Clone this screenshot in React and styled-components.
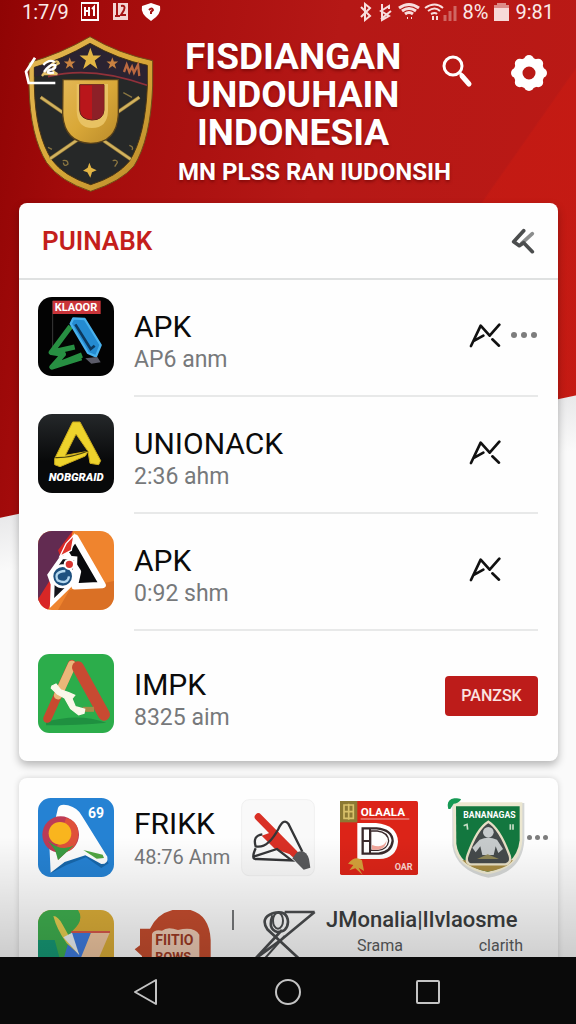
import React from 'react'
import styled, { createGlobalStyle } from 'styled-components'

const apps = [
  { name: 'APK', time: 'AP6 anm', icon: KlaoorIcon, more: true },
  { name: 'UNIONACK', time: '2:36 ahm', icon: NobgraidIcon },
  { name: 'APK', time: '0:92 shm', icon: FalconIcon },
  { name: 'IMPK', time: '8325 aim', icon: GreenIcon, action: 'PANZSK' },
]

function App() {
  return (
    <Screen>
      <GlobalStyle />
      <Content>
        <StatusBar>
          <StatusGroup>
            <span>1:7/9</span>
            <StatusIcons />
          </StatusGroup>
          <StatusGroup $tight>
            <SignalIcons />
            <span>8%</span>
            <Battery />
            <span>9:81</span>
          </StatusGroup>
        </StatusBar>
        <Header>
          <Brand>
            <Crest />
            <BackButton aria-label="Back">
              <svg width="34" height="30" viewBox="0 0 102 90" fill="none" stroke="#fff">
                <path d="M33 5 L6 47 L14 81 H94" strokeWidth="8" />
                <path d="M58 27 Q75 8 92 18 M60 48 Q80 20 94 28 Q96 40 76 42 Q62 54 90 50" strokeWidth="7" />
              </svg>
            </BackButton>
          </Brand>
          <Title>FISDIANGAN<br />UNDOUHAIN<br />INDONESIA</Title>
          <HeaderActions>
            <IconButton aria-label="Search">
              <svg width="32" height="34" viewBox="0 0 32 34" fill="none" stroke="#fff">
                <circle cx="11" cy="12" r="9" strokeWidth="3" />
                <path d="M18 19l3 3" strokeWidth="3" />
                <path d="M20 22l7 8" strokeWidth="5" strokeLinecap="round" />
              </svg>
            </IconButton>
            <IconButton aria-label="Settings">
              <Gear />
            </IconButton>
          </HeaderActions>
          <Subtitle>MN PLSS RAN IUDONSIH</Subtitle>
        </Header>
        <Card>
          <CardHeader>
            <CardTitle>PUINABK</CardTitle>
            <IconButton aria-label="Collapse">
              <svg width="24" height="26" viewBox="0 0 72 78" fill="none" strokeLinecap="round">
                <path d="M64 17 L32 46" stroke="#8b8d8d" strokeWidth="11" />
                <path d="M38 8 L8 41 L25 53 L38 44 L64 71" stroke="#4b4d4e" strokeWidth="11" strokeLinejoin="round" />
              </svg>
            </IconButton>
          </CardHeader>
          <List>
            {apps.map((app, index) => (
              <Row key={index} $last={index === apps.length - 1}>
                <AppIcon><app.icon /></AppIcon>
                <RowBody>
                  <Info>
                    <Name>{app.name}</Name>
                    <Time>{app.time}</Time>
                  </Info>
                  {app.action ? (
                    <ActionButton>{app.action}</ActionButton>
                  ) : (
                    <RowActions>
                      <IconButton aria-label="Activity">
                        <svg width="32" height="26" viewBox="0 0 96 78" fill="none" stroke="#111" strokeWidth="8" strokeLinecap="round" strokeLinejoin="round">
                          <path d="M6 72 L35 11 L62 41 L91 8 M16 56 L43 41" />
                          <path d="M70 52 L90 71" />
                        </svg>
                      </IconButton>
                      <MoreSlot>{app.more && <More />}</MoreSlot>
                    </RowActions>
                  )}
                </RowBody>
              </Row>
            ))}
          </List>
        </Card>
        <Card $lower>
          <Shelf>
            <AppIcon $flat><BalloonIcon /></AppIcon>
            <ShelfInfo>
              <Name>FRIKK</Name>
              <Time $small>48:76 Anm</Time>
            </ShelfInfo>
            <PenTile />
            <RedTile />
            <ShieldTile />
            <More small />
          </Shelf>
          <Promo>
            <AppIcon $flat><DriveIcon /></AppIcon>
            <HeadIcon />
            <Bar />
            <RibbonIcon />
            <PromoText>
              <PromoTitle>JMonalia|Ilvlaosme</PromoTitle>
              <PromoLinks>
                <span>Srama</span>
                <span>clarith</span>
              </PromoLinks>
            </PromoText>
          </Promo>
        </Card>
      </Content>
      <NavBar>
        <NavButton aria-label="Back">
          <svg width="28" height="30" viewBox="0 0 28 30" fill="none" stroke="#c4c4c4" strokeWidth="2" strokeLinejoin="round">
            <path d="M22 3v24L1 15z" />
          </svg>
        </NavButton>
        <NavButton aria-label="Home">
          <svg width="28" height="28" viewBox="0 0 28 28" fill="none" stroke="#c4c4c4" strokeWidth="2">
            <circle cx="14" cy="14" r="12" />
          </svg>
        </NavButton>
        <NavButton aria-label="Recent apps">
          <svg width="28" height="28" viewBox="0 0 28 28" fill="none" stroke="#c4c4c4" strokeWidth="2">
            <rect x="3" y="3" width="22" height="22" rx="1" />
          </svg>
        </NavButton>
      </NavBar>
    </Screen>
  )
}

export default App

function StatusIcons() {
  return (
    <svg width="82" height="20" viewBox="0 0 82 20" fill="none" stroke="#fff">
      <rect x="-1" y="1" width="17" height="17" strokeWidth="2" transform="translate(1 0)" />
      <path d="M4 5v9M8 5v9M4 9h4M11 7l2-2v9" strokeWidth="2" />
      <path d="M32 1h15v17H32z" fill="#f4d5d2" stroke="none" />
      <path d="M36 1v13M34 14h5M40 4q5-1 3 4l-3 5h5" stroke="#a51414" strokeWidth="2" />
      <path d="M70 1l9 3q2 8-9 15Q59 12 61 4z" fill="#fff" stroke="none" />
      <path d="M68 8q3-3 4 0l-2 2v2" stroke="#a51414" strokeWidth="2" />
    </svg>
  )
}

function SignalIcons() {
  return (
    <svg width="100" height="20" viewBox="0 0 100 20" fill="none" stroke="#f8dedd" strokeWidth="2">
      <path d="M3 5l9 9-5 4V2l5 4-9 9" />
      <path d="M24 2v16l7-4-8-5 8-5v3M23 17l10-8" />
      <path d="M41 6q10-7 20 0M44 9q7-5 14 0M47 12q4-3 8 0" strokeWidth="3" />
      <path d="M49 16h1M53 16h1M67 6q10-7 18 0M70 9q7-5 12 0M73 12q4-2 6 0M75 14v4M79 14v4" strokeWidth="2" />
      <path d="M87 13v6M92 9v10M97 4v15" stroke="#cf6763" strokeWidth="3" />
    </svg>
  )
}

function Battery() {
  return (
    <svg width="17" height="20" viewBox="0 0 17 20">
      <path d="M1 3h3V1h9v2h3v16H1z" fill="#f7d9d7" />
      <path d="M1 3h3V1h9v2h3v3H1z" fill="#dc8c88" />
    </svg>
  )
}

function Gear() {
  const teeth = [0, 45, 90, 135, 180, 225, 270, 315]
  return (
    <svg width="38" height="38" viewBox="0 0 38 38" fill="#fff">
      {teeth.map((deg) => (
        <circle key={deg} cx="19" cy="6" r="5" transform={`rotate(${deg} 19 19)`} />
      ))}
      <circle cx="19" cy="19" r="11" fill="none" stroke="#fff" strokeWidth="9" />
    </svg>
  )
}

function Crest() {
  const star = 'M0-28 L7-9 L27-9 L11 4 L18 25 L0 12 L-18 25 L-11 4 L-27-9 L-7-9z'
  return (
    <svg width="126" height="156" viewBox="0 0 378 468">
      <defs>
        <linearGradient id="gold" x1="0" y1="0" x2="1" y2="1">
          <stop offset="0" stopColor="#e3b755" />
          <stop offset="0.5" stopColor="#d9a838" />
          <stop offset="1" stopColor="#b98a2a" />
        </linearGradient>
      </defs>
      <path d="M186 2 Q270 52 374 74 V150 Q368 310 318 390 Q280 436 188 466 Q96 436 56 380 Q6 300 3 150 V80 Q100 52 186 2z" fill="url(#gold)" stroke="#6f4c18" strokeWidth="3" />
      <path d="M186 22 Q270 70 358 88 V150 Q352 300 304 376 Q266 422 188 446 Q108 420 72 372 Q22 296 19 150 V94 Q104 70 186 22z" fill="#262828" stroke="#4a3413" strokeWidth="3" />
      <path d="M186 24 Q270 72 357 90 V148 Q190 88 19 122 V95 Q104 70 186 24z" fill="#2b2331" />
      <path d="M357 148 Q190 88 60 122" fill="none" stroke="#91313a" strokeWidth="5" />
      <g stroke="#8a6f32" strokeWidth="11">
        <path d="M38 184 L308 370 M334 184 L66 368" />
      </g>
      <g stroke="#d1b25e" strokeWidth="7">
        <path d="M38 184 L308 370 M334 184 L66 368" />
      </g>
      <path d="M105 131 H271 V236 Q266 320 188 322 Q110 320 104 236z" fill="url(#gold)" stroke="#57401a" strokeWidth="4" />
      <path d="M146 144 H240 V225 Q238 276 192 276 Q148 276 146 225z" fill="#e8c263" />
      <path d="M155 146 H228 V222 Q226 252 192 252 Q156 250 155 222z" fill="#b9161b" stroke="#64201b" strokeWidth="3" />
      <path d="M192 147 H227 V222 Q226 250 192 251z" fill="#8d2027" />
      <g fill="#e2b544">
        <path d={star} transform="translate(187 69) scale(1.2)" />
        <path d={star} transform="translate(125 82) scale(.65)" fill="#c88141" />
        <path d={star} transform="translate(253 82) scale(.65)" fill="#c88141" />
        <path d="M184 380 l6 15 16 8-14 6-5 16-9-16-13-5 14-9z" />
      </g>
      <path d="M42 120 Q86 60 92 82 Q60 100 88 114 H44" fill="none" stroke="#e5c269" strokeWidth="7" />
      <path d="M288 108 l8-22 8 22 8-16 6 18 12-24 4 34" fill="none" stroke="#bb6940" strokeWidth="7" />
      <g fill="none" stroke="#8a7641" strokeWidth="4">
        <path d="M104 374 q16-4 16 10 q-12 10-14-4 M254 374 q14-4 14 6 l-8 12 M304 328 q14 4 8 14 M60 334 l12 6 M286 170 l26 14" />
      </g>
    </svg>
  )
}

function KlaoorIcon() {
  return (
    <svg viewBox="0 0 228 237">
      <rect width="228" height="237" rx="42" fill="#030303" />
      <path d="M44 12v140" stroke="#555" strokeWidth="2" />
      <rect x="44" y="11" width="144" height="40" fill="#c9353a" />
      <text x="50" y="43" fill="#fff" fontSize="33" fontWeight="700">KLAOOR</text>
      <path d="M98 88 L40 166 L110 150 M50 206 L132 174 M40 166 L76 172 L42 210 L130 182" fill="none" stroke="#278f42" strokeWidth="16" strokeLinejoin="round" />
      <path d="M106 64 L140 66 L188 144 L174 178 L150 168 L98 80z" fill="#248bd1" stroke="#48b1ed" strokeWidth="7" strokeLinejoin="round" />
      <path d="M112 82 L158 156 L170 146" fill="none" stroke="#0c385d" strokeWidth="8" />
      <path d="M142 184 l36-4 10 16-28 4z" fill="#5b5b68" />
    </svg>
  )
}

function NobgraidIcon() {
  return (
    <svg viewBox="0 0 228 237">
      <defs>
        <linearGradient id="coal" x1="0" y1="0" x2="0" y2="1">
          <stop offset="0" stopColor="#25282a" />
          <stop offset="0.6" stopColor="#08090a" />
        </linearGradient>
      </defs>
      <rect width="228" height="237" rx="42" fill="url(#coal)" />
      <path d="M104 24 H126 L188 140 L182 152 L156 148 L150 112 L114 60 L82 124 L150 112 L142 126 L66 158 L50 152 L50 134z" fill="#eed32c" stroke="#c9a91b" strokeWidth="3" strokeLinejoin="round" />
      <path d="M52 131 Q100 132 150 111" fill="none" stroke="#4d430d" strokeWidth="4" />
      <text x="32" y="202" fill="#fff" fontSize="34" fontWeight="900" fontStyle="italic">NOBGRAID</text>
    </svg>
  )
}

function FalconIcon() {
  return (
    <svg viewBox="0 0 228 237">
      <defs><clipPath id="falcon"><rect width="228" height="237" rx="42" /></clipPath></defs>
      <g clipPath="url(#falcon)">
        <rect width="228" height="237" fill="#ef842e" />
        <path d="M0 0 H104 L74 80 L0 220z" fill="#622b51" />
        <path d="M104 0 L60 58 L72 90 L0 205 V237 H30 L80 120z" fill="#d82726" />
        <path d="M94 178 L228 150 V237 H60z" fill="#ce6620" opacity=".65" />
        <path d="M112 20 L194 162 L110 166 L120 122 L82 64z" fill="#090a0d" stroke="#fff" strokeWidth="19" strokeLinejoin="round" />
        <path d="M84 38 l24-26-8 46-34 18z" fill="#df352a" stroke="#fff" strokeWidth="4" />
        <path d="M112 82 L110 150 L42 216 L44 160 L34 132 L72 78z" fill="#14151b" stroke="#fff" strokeWidth="12" />
        <circle cx="74" cy="136" r="32" fill="#1d517f" stroke="#fff" strokeWidth="8" />
        <path d="M82 120 q-36 2-23 28 q30 14 34-12" fill="none" stroke="#b5d9ef" strokeWidth="7" />
        <circle cx="94" cy="100" r="14" fill="#d83531" stroke="#fff" strokeWidth="6" />
      </g>
    </svg>
  )
}

function GreenIcon() {
  return (
    <svg viewBox="0 0 228 237">
      <rect width="228" height="237" rx="34" fill="#2cad4b" />
      <path d="M24 204 Q120 176 205 206 Q120 214 24 214z" fill="#1f9040" />
      <path d="M102 30 L28 194" stroke="#c7492f" strokeWidth="25" strokeLinecap="round" />
      <path d="M102 32 L60 124" stroke="#eab779" strokeWidth="25" strokeLinecap="round" />
      <path d="M120 40 L198 182" stroke="#c84a32" strokeWidth="36" strokeLinecap="round" />
      <path d="M134 166h34" stroke="#a68b48" strokeWidth="15" />
      <path d="M42 96 l12-6 14 18 24 8 18 8-8 10 10 24 28 8-2 12-16 4-24-18-18-32-22-12-18-18z" fill="#faf8e9" stroke="#faf8e9" strokeWidth="4" />
    </svg>
  )
}

function BalloonIcon() {
  return (
    <svg viewBox="0 0 228 237">
      <rect width="228" height="237" rx="38" fill="#2582d3" />
      <path d="M38 226 L84 202 L144 178 L190 210 L212 196 L120 60z" fill="#1767ab" />
      <path d="M60 30 Q66 16 90 22 Q120 30 132 54 L208 176 Q212 198 190 198 L142 172 L80 192 L38 224 L34 140z" fill="#fdfdfd" />
      <circle cx="68" cy="110" r="55" fill="#bd3b55" />
      <path d="M84 60 Q126 70 120 118 Q112 154 88 160 L60 186 L56 150z" fill="#df503a" />
      <path d="M30 128 Q70 164 108 142 L60 186 L52 158z" fill="#3a9b42" />
      <circle cx="66" cy="106" r="34" fill="#f9b51e" />
      <path d="M136 156 l58 14 4 10-22 2z" fill="#51a642" />
      <text x="150" y="59" fill="#fff" fontSize="42" fontWeight="700">69</text>
    </svg>
  )
}

function DriveIcon() {
  return (
    <svg viewBox="0 0 228 237">
      <defs><clipPath id="drive"><rect width="228" height="237" rx="40" /></clipPath></defs>
      <g clipPath="url(#drive)">
        <rect width="228" height="237" fill="#dcae38" />
        <path d="M0 0 H120 Q140 30 104 62 L80 237 H0z" fill="#3faf4f" />
        <path d="M0 90 L50 90 L90 237 H0z" fill="#169a76" />
        <path d="M100 66 H160 L130 150 H76z" fill="#3f7ce0" />
        <path d="M160 66 H216 L180 150 H126z" fill="#f1c8a2" />
        <path d="M100 66 H216" stroke="#d9584a" strokeWidth="6" />
        <path d="M46 18 Q60 18 74 44 L124 134 L86 100 Q56 58 46 18z" fill="#e7cf52" />
        <path d="M76 82 L124 136 L102 68z" fill="#eef2f5" />
      </g>
    </svg>
  )
}

function PenTile() {
  return (
    <svg width="74" height="78" viewBox="0 0 222 234" fill="none">
      <rect x="2" y="2" width="218" height="228" rx="22" fill="#f9f9f9" stroke="#f0f0f0" strokeWidth="3" />
      <path d="M52 54 L160 164" stroke="#d93025" strokeWidth="22" strokeLinecap="round" />
      <path d="M62 110 l46-16 52 76-58-20z" fill="#d93025" />
      <path d="M64 106 Q34 110 44 142 Q80 150 112 90 Q128 56 142 74 L184 158 M44 148 Q28 184 48 180 L152 184 L108 150 L40 172" stroke="#353638" strokeWidth="7" />
      <path d="M168 160 q26-12 36 20 l4 26 -20 6 -34-34z" fill="#58595b" />
    </svg>
  )
}

function RedTile() {
  return (
    <svg width="78" height="78" viewBox="0 0 234 234">
      <rect y="6" width="234" height="222" rx="5" fill="#dc2418" />
      <path d="M0 6h52v64H0z" fill="#8c7933" />
      <path d="M12 18h28v40H12zM26 14v48M12 38h30" fill="none" stroke="#d9c16a" strokeWidth="5" />
      <text x="62" y="50" fill="#fff" fontSize="35" fontWeight="700">OLAALA</text>
      <path d="M62 60h146" stroke="#f2aaa5" strokeWidth="3" />
      <path d="M52 72 H108 Q172 78 174 128 Q170 178 118 180 H52z" fill="#fff" />
      <path d="M68 88 H110 Q156 92 158 126 Q154 160 116 164 H68z" fill="#fff" stroke="#39292b" strokeWidth="7" />
      <path d="M92 96 H112 Q144 100 146 126 Q142 152 114 154 H92z" fill="#fff" stroke="#39292b" strokeWidth="4" />
      <path d="M96 138 Q130 150 140 124 Q138 150 114 152 H96z" fill="#f2a79c" />
      <path d="M68 126h22M90 90v72" stroke="#39292b" strokeWidth="6" />
      <path d="M24 194 Q46 168 66 184 L72 216 L56 206 L68 228 L46 208 L28 214 L40 198z" fill="#d5a13a" />
      <text x="164" y="212" fill="#fbd6d0" fontSize="27" fontWeight="700">OAR</text>
    </svg>
  )
}

function ShieldTile() {
  return (
    <svg width="78" height="82" viewBox="0 0 234 246">
      <path d="M16 18 H232 V130 Q226 226 124 242 Q28 222 16 146z" fill="#d5d7d6" />
      <path d="M18 16 H226 V128 Q222 214 122 232 Q28 214 20 140z" fill="#ece7d0" />
      <path d="M27 28 H218 V130 Q210 206 122 224 Q36 206 28 140z" fill="#13773f" />
      <path d="M46 190 H198 Q180 214 122 224 Q72 216 46 190z" fill="#a68a41" />
      <path d="M4 36 Q-4 8 22 4 Q40 2 42 8 Q32 20 20 20 L10 36z" fill="#179a55" />
      <path d="M124 74 Q158 94 188 176 Q194 198 176 202 H70 Q54 196 62 174 Q90 94 124 74z" fill="#454a4b" stroke="#e7dfc5" strokeWidth="7" />
      <g fill="#c7cbcc">
        <circle cx="124" cy="106" r="16" />
        <path d="M98 128 q26-12 52 0 l18 28-14 12-8-20-6 26h-34l-6-26-14 18-10-14z" />
        <path d="M90 186 l32-14 34 14z" fill="#8f8757" />
      </g>
      <text x="49" y="62" fill="#fff" fontSize="26" fontWeight="700">BANANAGAS</text>
      <path d="M50 86 l10-4 2 16M190 82v16M198 82v16" stroke="#c9dec7" strokeWidth="5" fill="none" />
    </svg>
  )
}

function HeadIcon() {
  return (
    <svg width="78" height="78" viewBox="0 0 234 234">
      <path d="M18 56 H48 Q76 -2 146 -4 Q226 2 230 90 V234 H24 V138 L2 118 L18 106z" fill="#c64d2e" />
      <path d="M54 72 Q60 58 84 62 Q100 48 132 60 Q180 48 196 74 V234 H52z" fill="#f0cdb6" />
      <text x="64" y="106" fill="#9e3a24" fontSize="42" fontWeight="700">FIITIO</text>
      <text x="64" y="154" fill="#9e3a24" fontSize="38" fontWeight="700">BOWS</text>
    </svg>
  )
}

function RibbonIcon() {
  return (
    <svg width="64" height="56" viewBox="0 0 192 168" fill="none" stroke="#4b4d4f" strokeWidth="8">
      <path d="M182 6 H92 M182 6 L78 92 L4 146 L84 60 M56 10 Q18 24 40 58 L148 158 M56 10 Q100 -2 102 36 Q100 66 70 66 Q40 58 56 16" />
      <ellipse cx="72" cy="32" rx="15" ry="24" strokeWidth="6" />
      <path d="M92 78 L16 164" strokeWidth="6" />
    </svg>
  )
}

function More({ small }) {
  return (
    <MoreButton $small={small} aria-label="More">
      <i /><i /><i />
    </MoreButton>
  )
}

const GlobalStyle = createGlobalStyle`
  *{
    box-sizing: border-box;
  }
  body{
    margin: 0;
    font-family: Roboto, "Liberation Sans", sans-serif;
    background: #0a0a0a;
  }
  button{
    padding: 0;
    border: 0;
    background: none;
    font-family: inherit;
    cursor: pointer;
  }
  svg{
    display: block;
    flex: none;
  }
`
const Screen = styled.div`
  height: 100vh;
  display: flex;
  flex-direction: column;
`
const Content = styled.main`
  position: relative;
  flex: 1;
  min-height: 0;
  overflow: hidden;
  background:
    linear-gradient(168deg, transparent 506px, #e9e9ea 507px, #fafafa 560px),
    linear-gradient(125deg, transparent 510px, rgba(214, 28, 16, 0.35) 512px),
    linear-gradient(100deg, #8f0404 0, #a30b0b 100px, #b51816 340px, #bd1a15 100%);

  &::after{
    content: '';
    position: absolute;
    left: 0;
    right: 0;
    bottom: 0;
    height: 120px;
    background: linear-gradient(transparent, rgba(0, 0, 0, 0.18));
    pointer-events: none;
  }
`
const StatusBar = styled.div`
  display: flex;
  align-items: center;
  justify-content: space-between;
  height: 24px;
  padding: 0 22px;
  color: #fbe9e8;
  font-size: 20px;
  line-height: 24px;
`
const StatusGroup = styled.div`
  display: flex;
  align-items: center;
  gap: ${props => props.$tight ? '5px' : '12px'};
`
const Header = styled.header`
  display: grid;
  grid-template-columns: 126px 1fr auto;
  grid-template-rows: 120px 59px;
  padding: 0 28px;
`
const Brand = styled.div`
  position: relative;
  grid-row: 1 / 3;
  padding-top: 12px;
`
const BackButton = styled.button`
  position: absolute;
  left: -4px;
  top: 32px;
`
const Title = styled.h1`
  justify-self: start;
  margin: 14px 0 0 31px;
  color: #fff;
  font-size: 37px;
  font-weight: 700;
  line-height: 38px;
  text-align: center;
  text-shadow: 0 2px 3px rgba(90, 0, 0, 0.5);
`
const Subtitle = styled.p`
  grid-column: 2 / 4;
  margin: 14px 0 0 24px;
  color: #fff;
  font-size: 24px;
  font-weight: 700;
  line-height: 28px;
  white-space: nowrap;
  text-shadow: 0 2px 3px rgba(90, 0, 0, 0.5);
`
const HeaderActions = styled.div`
  display: flex;
  align-items: flex-start;
  gap: 36px;
  padding-top: 30px;
`
const IconButton = styled.button`
  display: flex;
`
const Card = styled.section`
  margin: 0 18px 0 19px;
  background: #fefefe;
  border-radius: 8px;
  box-shadow: 0 4px 8px rgba(0, 0, 0, 0.28);
  ${props => props.$lower && `
    margin-top: 17px;
    padding: 20px 8px 0 19px;
    height: 220px;
    box-shadow: 0 0 6px rgba(0, 0, 0, 0.16);
  `}
`
const CardHeader = styled.div`
  display: flex;
  align-items: center;
  justify-content: space-between;
  height: 77px;
  padding: 0 23px;
  border-bottom: 2px solid #dfe1e1;
`
const CardTitle = styled.h2`
  margin: 0;
  color: #c41f1c;
  font-size: 26px;
  font-weight: 600;
`
const List = styled.ul`
  margin: 0;
  padding: 0;
  list-style: none;
`
const Row = styled.li`
  display: flex;
  gap: 20px;
  padding: ${props => props.$last ? '6px 20px 7px 19px' : '0 20px 0 19px'};

  &:not(:last-child) > div:last-child{
    border-bottom: 2px solid #e8e9e9;
  }
`
const AppIcon = styled.div`
  flex: none;
  width: 76px;
  height: 79px;
  margin-top: ${props => props.$flat ? '0' : '17px'};
`
const RowBody = styled.div`
  flex: 1;
  display: flex;
  align-items: center;
  justify-content: space-between;
  height: 117px;
`
const Info = styled.div`
  margin-top: 6px;
`
const Name = styled.div`
  color: #0b0b0b;
  font-size: 30px;
  line-height: 38px;
`
const Time = styled.div`
  color: #77797b;
  font-size: ${props => props.$small ? '20px' : '23px'};
  line-height: 28px;
  white-space: nowrap;
`
const RowActions = styled.div`
  display: flex;
  align-items: center;
  gap: 10px;
  margin-bottom: 6px;
`
const MoreSlot = styled.div`
  width: 27px;
`
const MoreButton = styled.button`
  display: flex;
  gap: ${props => props.$small ? '3px' : '4px'};

  i{
    width: ${props => props.$small ? '5px' : '6px'};
    height: ${props => props.$small ? '5px' : '6px'};
    border-radius: 50%;
    background: #7d7d7d;
  }
`
const ActionButton = styled.button`
  width: 93px;
  height: 40px;
  border-radius: 4px;
  background: #bd1c1a;
  color: #fbe3e1;
  font-size: 16px;
  font-weight: 500;
`
const Shelf = styled.div`
  display: flex;
  align-items: center;
  height: 79px;
`
const ShelfInfo = styled.div`
  width: 107px;
  margin-left: 20px;

  & + svg{
    margin-right: 25px;
  }
  & + svg + svg{
    margin-right: 29px;
  }
  & + svg + svg + svg{
    margin-right: 2px;
  }
`
const Promo = styled.div`
  display: flex;
  align-items: flex-start;
  gap: 20px;
  margin-top: 33px;
`
const Bar = styled.span`
  width: 2px;
  height: 20px;
  background: #77797b;
`
const PromoText = styled.div`
  flex: 1;
  margin-top: -6px;
  margin-left: -12px;
`
const PromoTitle = styled.h3`
  margin: 0;
  color: #3c3e40;
  font-size: 22px;
  font-weight: 500;
  line-height: 32px;
  white-space: nowrap;
`
const PromoLinks = styled.div`
  display: flex;
  justify-content: space-between;
  padding: 0 27px 0 31px;
  color: #5b5d5f;
  font-size: 16px;
  line-height: 20px;
`
const NavBar = styled.nav`
  display: flex;
  align-items: center;
  justify-content: center;
  gap: 112px;
  height: 67px;
  padding-top: 3px;
  background: #0a0a0a;
`
const NavButton = styled.button`
  display: flex;
`
